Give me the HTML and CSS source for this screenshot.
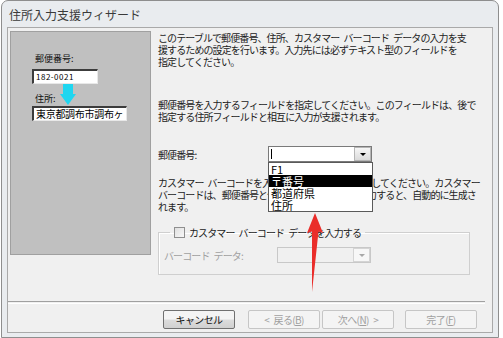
FILE: index.html
```html
<!DOCTYPE html>
<html lang="ja">
<head>
<meta charset="UTF-8">
<title>住所入力支援ウィザード</title>
<link rel="stylesheet" href="styles.css">
</head>
<body>
    <div class="window">
        <div class="titlebar">住所入力支援ウィザード</div>

        <div class="client">
            <div class="content">
                <div class="preview">
                    <div class="preview-label">郵便番号:</div>
                    <div class="preview-input zip">182-0021</div>
                    <div class="preview-label addr">住所:</div>
                    <div class="preview-input address">東京都調布市調布ヶ</div>
                    <svg class="cyan-arrow" width="16" height="21" viewBox="0 0 16 21">
                        <rect x="3" y="0" width="10" height="11" fill="#1fd6f0"/>
                        <polygon points="0,10 16,10 8,21" fill="#1fd6f0"/>
                    </svg>
                </div>

                <div class="steps">
                    <p class="text">このテーブルで郵便番号、住所、カスタマー&ensp;バーコード&ensp;データの入力を支<br>援するための設定を行います。入力先には必ずテキスト型のフィールドを<br>指定してください。</p>

                    <p class="text second">郵便番号を入力するフィールドを指定してください。このフィールドは、後で<br>指定する住所フィールドと相互に入力が支援されます。</p>

                    <div class="field-row">
                        <span class="field-label">郵便番号:</span>
                        <div class="combo">
                            <span class="caret"></span>
                            <span class="combo-button"><span class="tri"></span></span>
                            <ul class="dropdown">
                                <li>F1</li>
                                <li class="selected">〒番号</li>
                                <li>都道府県</li>
                                <li>住所</li>
                            </ul>
                        </div>
                    </div>

                    <p class="text third">カスタマー&ensp;バーコードを入力するフィールドを指定してください。カスタマー<br>バーコードは、郵便番号と住所フィールドの値を入力すると、自動的に生成さ<br>れます。</p>

                    <fieldset class="group">
                        <legend><span class="check"></span>カスタマー&ensp;バーコード&ensp;データを入力する</legend>
                        <div class="field-row disabled">
                            <span class="field-label">バーコード&ensp;データ:</span>
                            <div class="combo off">
                                <span class="combo-button"><span class="tri"></span></span>
                            </div>
                        </div>
                    </fieldset>
                </div>
            </div>

            <div class="separator"></div>

            <div class="buttons">
                <button class="btn">キャンセル</button>
                <button class="btn off back">&lt;&ensp;戻る(<u>B</u>)</button>
                <button class="btn off">次へ(<u>N</u>)&ensp;&gt;</button>
                <button class="btn off finish">完了(<u>F</u>)</button>
            </div>
        </div>

        <svg class="red-arrow" width="22" height="82" viewBox="0 0 22 82">
            <polygon points="12,1 20,21 15.5,19.5 9,80 9,19.5 4,21" fill="#ea2d2a"/>
        </svg>
    </div>
</body>
</html>
```

FILE: styles.css
```css
body {
    margin: 0;
    background-color: #fff;
    font-family: "Noto Sans CJK JP", sans-serif;
    color: #222;
}

.window {
    position: relative;
    box-sizing: border-box;
    width: 498px;
    height: 338px;
    margin-left: 1px;
    border: 1px solid #8e8e8e;
    border-radius: 7px 7px 0 0;
    background-color: #e9ecef;
}

.titlebar {
    height: 26px;
    padding-left: 7px;
    display: flex;
    align-items: center;
    font-size: 12px;
    color: #3a3a3a;
}

.client {
    box-sizing: border-box;
    height: 306px;
    margin: 0 5px;
    border: 1px solid #a9a9a9;
    background-color: #f0f0f0;
    display: flex;
    flex-direction: column;
}

.content {
    display: flex;
    padding: 3px 0 0 2px;
}

/* left preview picture */
.preview {
    position: relative;
    box-sizing: border-box;
    width: 141px;
    height: 224px;
    padding: 21px 0 0 21px;
    border: 1px solid #a0a0a0;
    background-color: #c0c0c0;
    font-size: 9px;
    flex-shrink: 0;
}

.preview-label {
    margin-left: 3px;
    line-height: 12px;
    color: #111;
}

.preview-label.addr {
    margin-top: 9px;
}

.preview-input {
    box-sizing: border-box;
    height: 15px;
    margin-top: 4px;
    padding-left: 2px;
    border-top: 2px solid #3c3c3c;
    border-left: 2px solid #3c3c3c;
    border-right: 1px solid #e8e8e8;
    border-bottom: 1px solid #e8e8e8;
    background-color: #fff;
    line-height: 12px;
    color: #000;
    white-space: nowrap;
    overflow: hidden;
}

.zip {
    width: 66px;
    font-size: 8px;
    letter-spacing: 0.5px;
}

.address {
    width: 95px;
    margin-top: 1px;
    font-size: 10px;
    letter-spacing: -0.3px;
}

.cyan-arrow {
    position: absolute;
    left: 49px;
    top: 52px;
}

/* right column */
.steps {
    margin-left: 7px;
    padding-top: 1px;
    width: 312px;
}

.text {
    margin: 0;
    font-size: 10px;
    line-height: 12px;
    letter-spacing: -0.9px;
    white-space: nowrap;
}

.text.second {
    margin-top: 31px;
}

.text.third {
    margin-top: 15px;
}

.field-row {
    display: flex;
    align-items: center;
    margin-top: 23px;
    font-size: 10px;
    letter-spacing: -0.9px;
}

.field-label {
    width: 110px;
    white-space: nowrap;
}

.combo {
    position: relative;
    box-sizing: border-box;
    width: 104px;
    height: 16px;
    border: 1px solid #7a7a7a;
    background-color: #fff;
}

.caret {
    position: absolute;
    left: 2px;
    top: 2px;
    width: 1px;
    height: 10px;
    background-color: #000;
}

.combo-button {
    position: absolute;
    right: 0;
    top: 0;
    box-sizing: border-box;
    width: 17px;
    height: 14px;
    border: 1px solid #b5b5b5;
    background: linear-gradient(#f6f6f6, #dadada);
    display: flex;
    align-items: center;
    justify-content: center;
}

.tri {
    width: 0;
    height: 0;
    border-left: 3px solid transparent;
    border-right: 3px solid transparent;
    border-top: 3px solid #000;
}

.dropdown {
    position: absolute;
    left: -1px;
    top: 15px;
    box-sizing: border-box;
    width: 105px;
    margin: 0;
    padding: 0;
    list-style: none;
    border: 1px solid #5a5a5a;
    background-color: #fff;
    font-size: 11px;
    line-height: 12px;
    letter-spacing: 0;
    color: #000;
    z-index: 2;
}

.dropdown li {
    padding-left: 2px;
}

.dropdown .selected {
    background-color: #000;
    color: #fff;
}

/* group box */
.group {
    margin: 13px 0 0;
    padding: 0 8px 11px;
    border: 1px solid #cfcfcf;
    box-shadow: inset 1px 1px 0 #fff;
}

.group legend {
    margin-left: 3px;
    padding: 0 4px;
    display: flex;
    align-items: center;
    height: 13px;
    font-size: 10px;
    letter-spacing: -0.9px;
}

.check {
    box-sizing: border-box;
    width: 11px;
    height: 11px;
    margin-right: 4px;
    border: 1px solid #8f8f8f;
    background: linear-gradient(135deg, #e0e0e0, #f8f8f8);
}

.field-row.disabled {
    margin-top: 8px;
    margin-left: -3px;
    color: #a0a0a0;
}

.field-row.disabled .field-label {
    width: 113px;
}

.combo.off {
    width: 94px;
    border-color: #c8c8c8;
    background-color: #f0f0f0;
}

.combo.off .combo-button {
    border-color: #d4d4d4;
    background: #f7f7f7;
}

.combo.off .tri {
    border-top-color: #a8a8a8;
}

/* footer */
.separator {
    margin: auto 7px 0 0;
    height: 1px;
    border-top: 1px solid #a0a0a0;
    border-bottom: 1px solid #fff;
}

.buttons {
    display: flex;
    justify-content: flex-end;
    padding: 6px 15px 3px 0;
}

.btn {
    box-sizing: border-box;
    width: 72px;
    height: 19px;
    padding: 0;
    border: 1px solid #707070;
    border-radius: 2px;
    background: linear-gradient(#f4f4f4 45%, #dcdcdc 55%, #d0d0d0);
    font-family: "Noto Sans CJK JP", sans-serif;
    font-size: 10px;
    letter-spacing: -0.6px;
    color: #111;
}

.btn.off {
    margin-left: 2px;
    border-color: #c6c6c6;
    background: #f4f4f4;
    color: #a0a0a0;
}

.btn.back {
    margin-left: 13px;
}

.btn.finish {
    margin-left: 11px;
}

.red-arrow {
    position: absolute;
    left: 301px;
    top: 211px;
    z-index: 3;
}
```
